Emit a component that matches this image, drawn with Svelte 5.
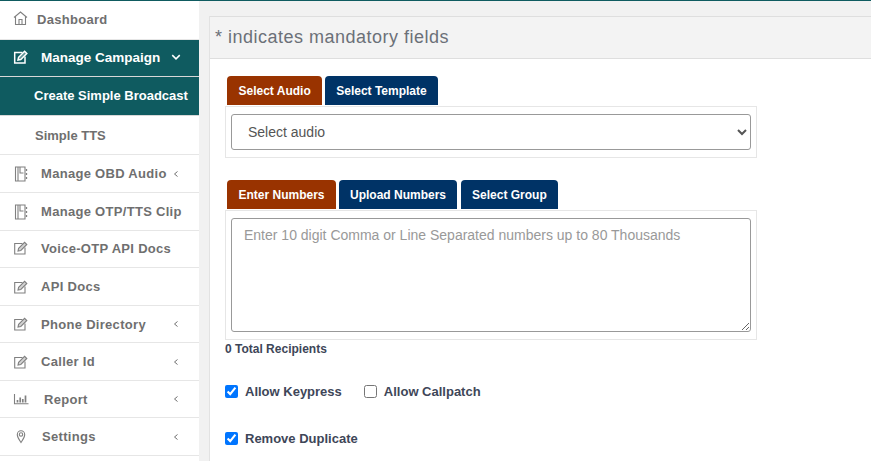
<script>
  const items = [
    { label: 'Manage OBD Audio', icon: 'book', chev: true, h: 38, gap: 12 },
    { label: 'Manage OTP/TTS Clip', icon: 'book', chev: false, h: 38, gap: 12 },
    { label: 'Voice-OTP API Docs', icon: 'edit', chev: false, h: 37, gap: 12, lift: true },
    { label: 'API Docs', icon: 'edit', chev: false, h: 38, gap: 12 },
    { label: 'Phone Directory', icon: 'edit', chev: true, h: 37, gap: 12 },
    { label: 'Caller Id', icon: 'edit', chev: true, h: 38, gap: 12 },
    { label: 'Report', icon: 'chart', chev: true, h: 37, gap: 15 },
    { label: 'Settings', icon: 'pin', chev: true, h: 38, gap: 13 }
  ];
</script>

{#snippet icon(name)}
  <svg class="ico" viewBox="0 0 16 16" fill="none" stroke="currentColor" stroke-width="1.1">
    {#if name === 'home'}
      <path d="M1 6.500 7.500 1 14 6.500M2.500 5.500v8h10v-8M6 13.500V8.500h3v5" />
    {:else if name === 'edit'}
      <path d="M9.500 3.500H1.700V14H12V7.500" /><path d="M5 11l.6-2.700 6-6 2.200 2.200-6 6z" fill="currentColor" fill-opacity=".35" />
    {:else if name === 'book'}
      <path d="M2.500 1h9.500v14H2.500zM5 1v14M7 1v6h3.500" /><path d="M13.500 3v2M13.500 7v2M13.500 11v2" stroke-width="1.300" />
    {:else if name === 'chart'}
      <path d="M1.500 3v9.700h14" /><path d="M4.500 11.500V9M7.200 11.500V6.500M9.800 11.500V8M12.500 11.500V4.500" stroke-width="1.700" />
    {:else if name === 'pin'}
      <path d="M8 13.500C6 10.500 4.300 8.500 4.300 5.500a3.700 3.700 0 0 1 7.400 0C11.700 8.500 10 10.500 8 13.500z" /><circle cx="8" cy="5.500" r="1.700" />
    {/if}
  </svg>
{/snippet}

{#snippet chevLeft()}
  <svg class="chev" viewBox="0 0 8 8" fill="none" stroke="currentColor" stroke-width="1"><path d="M5.500 1.500 2.500 4l3 2.500" /></svg>
{/snippet}

<div class="page">
  <aside class="side">
    <div class="row dash">
      {@render icon('home')}
      <span class="lbl">Dashboard</span>
    </div>
    <div class="row active">
      {@render icon('edit')}
      <span class="lbl">Manage Campaign</span>
      <svg class="chevd" viewBox="0 0 8 8" fill="none" stroke="currentColor" stroke-width="1.200"><path d="M1 2.500 4 5.500l3-3" /></svg>
    </div>
    <div class="sub cur">Create Simple Broadcast</div>
    <div class="sub tts">Simple TTS</div>
    {#each items as it}
      <div class="row item" class:lift={it.lift} style="height:{it.h}px">
        {@render icon(it.icon)}
        <span class="lbl" style="margin-left:{it.gap}px">{it.label}</span>
        {#if it.chev}{@render chevLeft()}{/if}
      </div>
    {/each}
  </aside>

  <main class="main">
    <section class="panel">
      <h2 class="head">* indicates mandatory fields</h2>
      <div class="body">
        <div class="tabs">
          <button class="tab on">Select Audio</button>
          <button class="tab">Select Template</button>
        </div>
        <div class="box">
          <select class="sel"><option>Select audio</option></select>
        </div>

        <div class="tabs second">
          <button class="tab on">Enter Numbers</button>
          <button class="tab">Upload Numbers</button>
          <button class="tab group">Select Group</button>
        </div>
        <div class="box">
          <textarea class="area" placeholder="Enter 10 digit Comma or Line Separated numbers up to 80 Thousands"></textarea>
        </div>
        <div class="total">0 Total Recipients</div>

        <div class="checks first">
          <label><input type="checkbox" checked /><span>Allow Keypress</span></label>
          <label class="cb2"><input type="checkbox" /><span>Allow Callpatch</span></label>
        </div>
        <div class="checks">
          <label><input type="checkbox" checked /><span>Remove Duplicate</span></label>
        </div>
      </div>
    </section>
  </main>
</div>

<style>
  :global(body) {
    margin: 0;
    overflow: hidden;
  }
  .page {
    width: 871px;
    height: 461px;
    display: flex;
    overflow: hidden;
    border-top: 1px solid #0f5b60;
    box-sizing: border-box;
    background: #f1f1f1;
    font-family: "Liberation Sans", Arial, sans-serif;
  }
  .side {
    width: 199px;
    flex: none;
    background: #fff;
    font-weight: 700;
    font-size: 13px;
    color: #6f6f6f;
  }
  .row {
    display: flex;
    align-items: center;
    box-sizing: border-box;
    padding-left: 13px;
    border-bottom: 1px solid #e6e6e6;
  }
  .ico {
    width: 16px;
    height: 16px;
    flex: none;
    color: #808080;
  }
  .dash {
    height: 39px;
    padding-bottom: 2px;
  }
  .dash .lbl {
    margin-left: 8px;
    letter-spacing: 0.3px;
  }
  .active {
    height: 37px;
    background: #0f5b60;
    color: #fff;
    border-bottom: 1px solid #d8d8d8;
    padding-bottom: 2px;
  }
  .active .ico {
    color: #fff;
    stroke-width: 1.5;
  }
  .active .lbl {
    margin-left: 12px;
    font-size: 13.500px;
  }
  .chevd {
    width: 10px;
    height: 10px;
    margin-left: 11px;
  }
  .sub {
    box-sizing: border-box;
    display: flex;
    align-items: center;
    height: 40px;
    font-size: 13px;
  }
  .cur {
    height: 39px;
    background: #0f5b60;
    color: #fff;
    padding-left: 34px;
    padding-bottom: 2px;
    border-bottom: 1px solid #d8d8d8;
  }
  .tts {
    height: 39px;
    padding-left: 35px;
    border-bottom: 1px solid #e6e6e6;
  }
  .item .lbl {
    flex: none;
    letter-spacing: 0.3px;
  }
  .lift {
    padding-bottom: 2px;
  }
  .chev {
    width: 8px;
    height: 8px;
    position: absolute;
    left: 172px;
  }
  .item {
    position: relative;
  }
  .main {
    flex: 1;
    min-width: 0;
    padding: 15px 0 0 10px;
  }
  .panel {
    background: #fff;
    border-left: 1px solid #e2e2e2;
    height: 100%;
  }
  .head {
    margin: 0;
    height: 43px;
    box-sizing: border-box;
    display: flex;
    align-items: center;
    padding-left: 5px;
    background: #f3f3f3;
    border-top: 1px solid #dedede;
    border-bottom: 1px solid #dedede;
    font-weight: 400;
    font-size: 18px;
    letter-spacing: 0.5px;
    color: #6b7078;
  }
  .body {
    padding: 17px 0 0 15px;
  }
  .tabs {
    display: flex;
    gap: 3px;
    padding-left: 2px;
    height: 30px;
  }
  .second {
    margin-top: 22px;
  }
  .tab {
    border: 0;
    padding: 0 11px;
    height: 29px;
    border-radius: 4px 4px 0 0;
    background: #003366;
    color: #fff;
    font-family: inherit;
    font-weight: 700;
    font-size: 12px;
  }
  .tabs .tab:first-child {
    padding: 0 11.500px;
  }
  .tab.group {
    margin-left: 1px;
  }
  .tab.on {
    background: #993300;
  }
  .box {
    box-sizing: border-box;
    width: 532px;
    padding: 7px 5px 7px 5px;
    border: 1px solid #e6e6e6;
    background: #fff;
  }
  .sel {
    display: block;
    width: 100%;
    height: 36px;
    box-sizing: border-box;
    border: 1px solid #999;
    border-radius: 3px;
    background: #fff;
    padding-left: 12px;
    font-family: inherit;
    font-size: 14px;
    color: #555;
  }
  .area {
    display: block;
    width: 100%;
    height: 114px;
    box-sizing: border-box;
    border: 1px solid #999;
    border-radius: 3px;
    padding: 8px 12px;
    font-family: inherit;
    font-size: 14px;
    color: #555;
    background: #fff;
  }
  .area::placeholder {
    color: #999;
    opacity: 1;
  }
  .total {
    margin-top: 2px;
    font-size: 12px;
    font-weight: 700;
    color: #3e4658;
    line-height: 14px;
  }
  .checks {
    display: flex;
    align-items: center;
    height: 18px;
    color: #3e4658;
    font-size: 13px;
    font-weight: 700;
    margin-top: 29px;
  }
  .checks.first {
    margin-top: 26px;
  }
  .checks label {
    display: flex;
    align-items: center;
  }
  .checks input {
    width: 13px;
    height: 13px;
    margin: 0 7px 0 0;
    accent-color: #0075ff;
  }
  .cb2 {
    margin-left: 22px;
  }
</style>
